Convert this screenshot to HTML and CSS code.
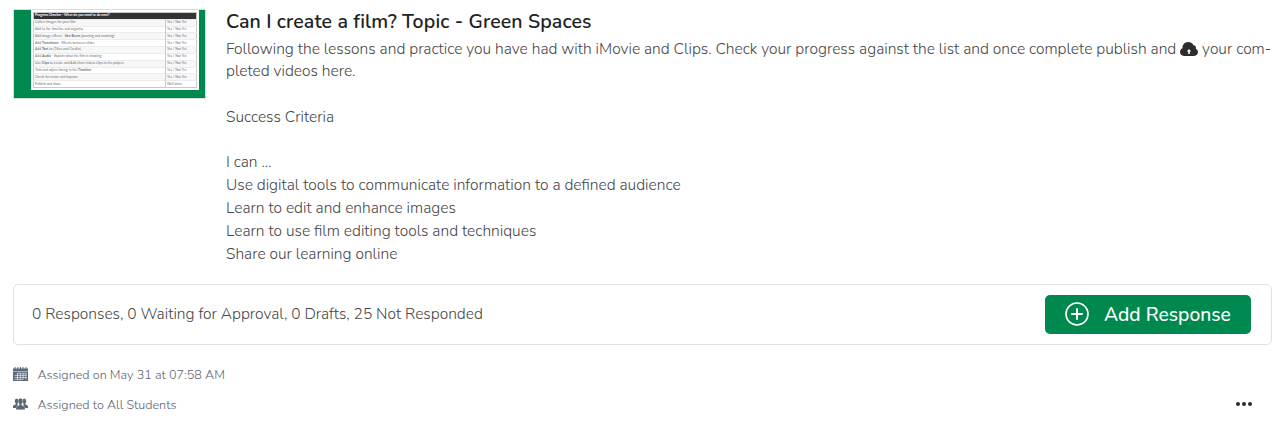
FILE: index.html
```
<!DOCTYPE html>
<html lang="en">

<head>
    <meta charset="UTF-8">
    <meta name="viewport" content="width=device-width, initial-scale=1.0">
    <title>Activity</title>
    <link rel="stylesheet" href="styles.css">
</head>

<body>
    <article class="activity">
        <section class="activity-main">
            <div class="thumb">
                <div class="sheet">
                    <table>
                        <colgroup><col class="task"><col></colgroup>
                        <tr><th colspan="2">Progress Checker - What do you need to do next?</th></tr>
                        <tr><td>Collect images for your film</td><td>Yes / Not Yet</td></tr>
                        <tr><td>Add to the timeline and organise</td><td>Yes / Not Yet</td></tr>
                        <tr><td>Add image effects - <b>Ken Burns</b> (panning and zooming)</td><td>Yes / Not Yet</td></tr>
                        <tr><td>Add <b>Transitions</b> - Effects between slides</td><td>Yes / Not Yet</td></tr>
                        <tr><td>Add <b>Text</b> to (Titles and Credits)</td><td>Yes / Not Yet</td></tr>
                        <tr><td>Add <b>Audio</b> - Explain what the film is showing</td><td>Yes / Not Yet</td></tr>
                        <tr><td>Use <b>Clips</b> to create and Add short videos clips to the project</td><td>Yes / Not Yet</td></tr>
                        <tr><td>Trim and adjust timing in the <b>Timeline</b></td><td>Yes / Not Yet</td></tr>
                        <tr><td>Check for errors and improve</td><td>Yes / Not Yet</td></tr>
                        <tr><td>Publish and share</td><td>Well done</td></tr>
                    </table>
                </div>
            </div>
            <div class="details">
                <h1>Can I create a film? Topic - Green Spaces</h1>
                <p>Following the lessons and practice you have had with iMovie and Clips. Check your progress against the list and once complete publish and
                    <svg class="cloud" viewBox="0 0 18 14"><path fill="#2d2d2f" d="M4 14C1.600 14 0 12.300 0 10.100C0 8.300 1 6.900 2.500 6.300C2.200 2.800 4.700 0 8.200 0C10.900 0 12.700 1.300 13.400 3.300C15.300 3.300 16.300 5 15.900 6.700C17.300 7.400 18 8.700 18 10.100C18 12.400 16.400 14 14 14Z"/><path fill="#fff" d="M9 7L11.200 9.400H9.800V12H8.200V9.400H6.800Z"/></svg>
                    your com-</p>
                <p>pleted videos here.</p>
                <br>
                <p>Success Criteria</p>
                <br>
                <p>I can ...</p>
                <p>Use digital tools to communicate information to a defined audience</p>
                <p>Learn to edit and enhance images</p>
                <p>Learn to use film editing tools and techniques</p>
                <p>Share our learning online</p>
            </div>
        </section>

        <section class="responses">
            <span class="counts">0 Responses, 0 Waiting for Approval, 0 Drafts, 25 Not Responded</span>
            <button class="add" type="button">
                <svg viewBox="0 0 24 24" fill="none" stroke="#fff" stroke-width="1.600"><circle cx="12" cy="12" r="11"/><path stroke-width="1.900" d="M12 6.300V17.700M6.300 12H17.700"/></svg>
                <span>Add Response</span>
            </button>
        </section>

        <footer>
            <ul class="meta">
                <li>
                    <svg viewBox="0 0 15 14"><path fill="#5b6676" d="M0 1.500H1.500V0H2.500V1.500H4.500V0H5.500V1.500H7V0H8V1.500H9.500V0H10.500V1.500H12.500V0H13.500V1.500H15V4H0ZM0 4.600H15V14H0Z"/><path stroke="#fff" stroke-width=".6" d="M4.500 6.300V12.500M7.300 6.300V12.500M10.100 6.300V12.500M12.900 6.300V12.500M4 6.300H13.500M1.500 8.400H13.500M1.500 10.500H13.500M1.500 12.600H10"/></svg>
                    <span>Assigned on May 31 at 07:58 AM</span>
                </li>
                <li>
                    <svg viewBox="0 0 15 12"><g fill="#5b6676"><ellipse cx="3.600" cy="3.100" rx="1.800" ry="2.500"/><ellipse cx="11.400" cy="3.100" rx="1.800" ry="2.500"/><path d="M0 10V8.300C0 7.200 2.700 6.800 2.800 6V5H4.500V10ZM15 10V8.300C15 7.200 12.300 6.800 12.200 6V5H10.500V10Z"/></g><path fill="#5b6676" stroke="#fff" stroke-width=".3" d="M7.500 .3C9 .3 10 1.400 9.900 3.200C9.800 4.500 9.300 5.300 8.700 5.900V7C8.900 7.900 12 8.200 12 9.700V11.700H3V9.700C3 8.200 6.100 7.900 6.300 7V5.900C5.700 5.300 5.200 4.500 5.100 3.200C5 1.400 6 .3 7.500 .3Z"/></svg>
                    <span>Assigned to All Students</span>
                </li>
            </ul>
            <div class="more"><i></i><i></i><i></i></div>
        </footer>
    </article>
</body>

</html>
```

FILE: styles.css
```
* {
    box-sizing: border-box;
}

body {
    margin: 0;
    background: #fff;
    color: #454547;
    font-family: Nunito, "Open Sans", sans-serif;
    font-size: 15.52px;
    font-weight: 300;
}

.activity {
    padding: 9px 8.5px 0 12.5px;
}

.activity-main {
    display: flex;
    gap: 20px;
    height: 275px;
    padding-left: 0.5px;
}

.thumb {
    flex: none;
    width: 193px;
    height: 90px;
    padding: 0 6px 0 17px;
    border: 1px solid #d5dedb;
    background: #00894f;
}

.sheet {
    height: 80px;
    padding: 2px 2px 0;
    background: #fff;
}

.sheet table {
    width: 100%;
    height: 76px;
    border-collapse: collapse;
    border: 1px solid #c9c9c9;
    table-layout: fixed;
    font-family: Lato, sans-serif;
    font-size: 3.4px;
    font-weight: 400;
    line-height: 5px;
    color: #707070;
}

.sheet .task {
    width: 132px;
}

.sheet th {
    padding: 0 1px;
    background: #333335;
    color: #fff;
    text-align: left;
}

.sheet td {
    padding: 0 1px;
    border-top: 1px solid #ececec;
    white-space: nowrap;
}

.sheet td:first-child {
    border-right: 1px solid #c9c9c9;
}

.sheet tr:nth-child(even) {
    background: #f7f7f7;
}

.details {
    line-height: 22.8px;
    white-space: nowrap;
}

.details h1 {
    margin: 0 0 3.5px;
    font-size: 19.5px;
    font-weight: 600;
    line-height: 25px;
    letter-spacing: 0.12px;
    color: #222;
}

.details p {
    margin: 0;
}

.cloud {
    width: 18px;
    height: 14px;
    vertical-align: -2px;
}

.responses {
    display: flex;
    align-items: center;
    justify-content: space-between;
    height: 61px;
    padding: 0 19.5px 1px 18.5px;
    border: 1px solid #dfe1e8;
    border-radius: 5px;
}

.counts {
    padding-bottom: 1px;
}

.add {
    display: flex;
    align-items: center;
    gap: 15px;
    width: 206px;
    height: 39px;
    padding: 0 0 0 20px;
    border: 0;
    border-radius: 5px;
    background: #00894f;
    color: #fff;
    font: 500 19.3px Nunito, "Open Sans", sans-serif;
    white-space: nowrap;
}

.add svg {
    flex: none;
    width: 24px;
    height: 24px;
}

footer {
    display: flex;
    justify-content: space-between;
    align-items: flex-end;
    padding: 14px 19.5px 0 0;
}

.meta {
    margin: 0;
    padding: 0;
    list-style: none;
    font-size: 12.6px;
    color: #5d6170;
}

.meta li {
    display: flex;
    align-items: center;
    gap: 10px;
    height: 30px;
}

.meta svg {
    width: 15px;
    height: 14px;
}

.more {
    display: flex;
    align-items: center;
    gap: 2px;
    height: 30px;
}

.more i {
    width: 4px;
    height: 4px;
    border-radius: 50%;
    background: #2d2d2f;
}
```
